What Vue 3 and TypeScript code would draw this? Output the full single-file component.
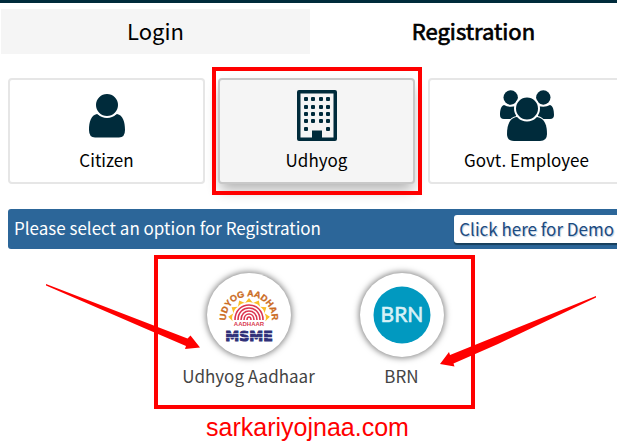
<script setup lang="ts">
import { ref } from 'vue'

type Tab = 'Login' | 'Registration'
type Role = 'citizen' | 'udhyog' | 'govt'

const tabs: Tab[] = ['Login', 'Registration']
const activeTab = ref<Tab>('Registration')
const role = ref<Role>('udhyog')

const roles: { id: Role; label: string }[] = [
  { id: 'citizen', label: 'Citizen' },
  { id: 'udhyog', label: 'Udhyog' },
  { id: 'govt', label: 'Govt. Employee' },
]

const windowRows = [9, 17, 24, 31]
const windowCols = [7, 14, 22, 29]
const rayAngles = [-84, -56, -28, 0, 28, 56, 84]
</script>

<template>
  <div class="page">
    <header class="topbar"></header>
    <nav class="tabs">
      <button
        v-for="t in tabs"
        :key="t"
        type="button"
        class="tab"
        :class="{ active: activeTab === t }"
        @click="activeTab = t"
      >{{ t }}</button>
    </nav>

    <main class="content">
      <div class="roles">
        <button
          v-for="r in roles"
          :key="r.id"
          type="button"
          class="role"
          :class="{ selected: role === r.id }"
          @click="role = r.id"
        >
          <svg v-if="r.id === 'citizen'" class="icon" width="40" height="52" viewBox="0 0 40 52" aria-hidden="true">
            <path d="M10 24C4 25 2 32 2 40Q2 47.500 8 47.500H32Q38 47.500 38 40C38 32 36 25 30 24Q20 30 10 24Z" />
            <circle cx="20" cy="15" r="12" class="cutout" />
          </svg>
          <svg v-else-if="r.id === 'udhyog'" class="icon" width="40" height="52" viewBox="0 0 40 52" aria-hidden="true">
            <path fill-rule="evenodd" d="M2 0H38Q40 0 40 2V49Q40 51 38 51H2Q0 51 0 49V2Q0 0 2 0ZM3.500 3.500V47.500H15V40.500H25V47.500H36.500V3.500Z" />
            <template v-for="y in windowRows" :key="y">
              <rect v-for="x in windowCols" :key="x" :x="x" :y="y - 2" width="4" height="4" rx="1" />
            </template>
            <rect x="7" y="37" width="4" height="4" rx="1" />
            <rect x="29" y="37" width="4" height="4" rx="1" />
          </svg>
          <svg v-else class="icon" width="56" height="52" viewBox="0 0 56 52" aria-hidden="true">
            <circle cx="11.700" cy="7.500" r="7.200" />
            <circle cx="44.300" cy="7.500" r="7.200" />
            <path d="M5 15C2 16 1 20 1 25Q1 29 5 29H17V16Q10 18 5 15Z" />
            <path d="M51 15C54 16 55 20 55 25Q55 29 51 29H39V16Q46 18 51 15Z" />
            <path class="edge" d="M18 27C10 28 8 36 8 44Q8 51 15 51H41Q48 51 48 44C48 36 46 28 38 27Z" />
            <circle cx="28" cy="18.500" r="12" class="cutout" />
          </svg>
          <span>{{ r.label }}</span>
          <span v-if="r.id === 'udhyog'" class="marker"></span>
        </button>
      </div>

      <div class="banner">
        <span>Please select an option for Registration</span>
        <button type="button" class="demo">Click here for Demo</button>
      </div>

      <div class="options-row">
        <div class="options">
          <a href="#udhyog-aadhaar" class="option">
            <span class="badge">
              <svg width="84" height="84" viewBox="0 0 84 84" aria-hidden="true">
                <defs>
                  <path id="arch" d="M20 53A23 23 0 1 1 64 53" />
                </defs>
                <text class="arch-text"><textPath href="#arch" startOffset="50%" text-anchor="middle">UDYOG AADHAR</textPath></text>
                <path
                  v-for="a in rayAngles"
                  :key="a"
                  class="ray"
                  d="M38 30L42 25L46 30Q42 28 38 30Z"
                  :transform="`rotate(${a} 42 46)`"
                />
                <g class="print">
                  <path d="M28 47C28 27 56 27 56 47" />
                  <path d="M31 47C31 31 53 31 53 47" />
                  <path d="M34 47C34 35 50 35 50 47" />
                  <path d="M37 47C37 39 47 39 47 47" />
                  <path d="M40 47C40 43 44 43 44 47" />
                </g>
                <text class="aadhaar" x="42" y="53" text-anchor="middle">AADHAAR</text>
                <text class="msme" x="42" y="68" text-anchor="middle">MSME</text>
                <path class="stripes" d="M17 60.500H67M17 64.500H67" />
              </svg>
            </span>
            <span>Udhyog Aadhaar</span>
          </a>
          <a href="#brn" class="option">
            <span class="badge">
              <svg width="84" height="84" viewBox="0 0 84 84" aria-hidden="true">
                <circle cx="42" cy="42" r="28.500" fill="#0199c0" />
                <text class="brn" x="42" y="49" text-anchor="middle">BRN</text>
              </svg>
            </span>
            <span>BRN</span>
          </a>
          <svg class="arrow arrow-left" width="154" height="66" viewBox="0 0 154 66" aria-hidden="true">
            <path d="M0 0L141.500 54.500L144.500 51.500L154 63.500L139 65L140 62L98 44L0 1.500Z" />
          </svg>
          <svg class="arrow arrow-right" width="156" height="71" viewBox="0 0 156 71" aria-hidden="true">
            <path d="M156 0L10 59L9 56L0 68L14.500 70.500L13.500 67.500L58 48L156 1.500Z" />
          </svg>
        </div>
      </div>
    </main>
    <footer class="site">sarkariyojnaa.com</footer>
  </div>
</template>

<style>
body {
  margin: 0;
  background: #fff;
}
</style>

<style scoped>
.page {
  overflow: hidden;
  color: #000;
  font-family: "Noto Sans CJK SC", "Noto Sans", sans-serif;
  font-size: 17px;
  line-height: 24px;
}
button {
  font: inherit;
  color: inherit;
  cursor: pointer;
}
.topbar {
  height: 3px;
  background: #002b3b;
}
.tabs {
  display: grid;
  grid-template-columns: 17fr 18fr;
  margin: 6px -20px 0 1px;
}
.tab {
  height: 45px;
  padding: 0 0 4px;
  border: 0;
  background: #f5f5f5;
  font-size: 22px;
}
.tab.active {
  background: #fff;
  -webkit-text-stroke: 0.7px #000;
}
.content {
  margin: 24px -8px 0 8px;
}
.roles {
  display: grid;
  grid-template-columns: repeat(3, 1fr);
  gap: 13px;
}
.role {
  position: relative;
  display: flex;
  flex-direction: column;
  align-items: center;
  gap: 6px;
  height: 106px;
  padding: 10px 0 0;
  border: 2px solid #e6e6e6;
  border-radius: 4px;
  background: #fff;
}
.role.selected {
  border-color: #c8c8c8;
  background: #f5f5f5;
  box-shadow: 0 8px 14px -2px rgba(0, 0, 0, 0.3);
}
.icon {
  fill: #002b3b;
}
.cutout {
  stroke: #fff;
  stroke-width: 2px;
}
.edge {
  stroke: #fff;
  stroke-width: 2px;
  paint-order: stroke;
}
.marker {
  position: absolute;
  inset: -13px -9px -13px -8px;
  border: 4px solid #f00;
}
.banner {
  display: flex;
  align-items: center;
  justify-content: space-between;
  box-sizing: border-box;
  height: 40px;
  margin-top: 25px;
  padding: 0 0 2px 6px;
  border-radius: 3px;
  background: #2c6699;
  color: #fff;
}
.demo {
  height: 28px;
  margin-top: 2px;
  padding: 0 11px 0 5px;
  border: 0;
  border-radius: 3px;
  background: #fff;
  box-shadow: 0 2px 1px #173f5c;
  color: #1d4b80;
  text-shadow: 1px 1px 1px #b8cbe0;
}
.options-row {
  display: flex;
  justify-content: center;
  margin-top: 6px;
  padding-right: 4px;
}
.options {
  position: relative;
  display: flex;
  box-sizing: border-box;
  height: 154px;
  padding: 14px 0 0 14px;
  border: 4px solid #f00;
}
.option {
  display: flex;
  flex-direction: column;
  align-items: center;
  gap: 7px;
  width: 153px;
  color: #444;
  text-decoration: none;
}
.options::after {
  content: "";
  width: 0;
  margin-right: -7px;
}
.badge {
  display: block;
  width: 84px;
  height: 84px;
  border-radius: 50%;
  background: #fff;
  box-shadow: 0 0 6px 1px rgba(0, 0, 0, 0.5);
}
.badge svg {
  display: block;
}
.arch-text {
  font: 700 9px "Liberation Sans", sans-serif;
  fill: #cc6b22;
  stroke: #cc6b22;
  stroke-width: 0.3px;
}
.ray {
  fill: #fbbd28;
}
.print {
  fill: none;
  stroke: #dc3550;
  stroke-width: 1.6px;
}
.aadhaar {
  font: 700 6px "Liberation Sans", sans-serif;
  fill: #d93a50;
}
.msme {
  font: 700 14px "DejaVu Sans", sans-serif;
  fill: #303078;
  stroke: #303078;
  stroke-width: 1px;
}
.stripes {
  stroke: #fff;
  stroke-width: 0.6px;
}
.brn {
  font: 400 21px Lato, sans-serif;
  fill: #d8f1f7;
  stroke: #d8f1f7;
  stroke-width: 0.6px;
}
.arrow {
  position: absolute;
  fill: #f00;
  pointer-events: none;
}
.arrow-left {
  top: 25px;
  left: -112px;
}
.arrow-right {
  top: 37px;
  left: 282px;
}
.site {
  margin-top: 3px;
  padding-right: 2px;
  color: #f00;
  font-family: "Liberation Sans", Arial, sans-serif;
  font-size: 25px;
  line-height: 30px;
  text-align: center;
}
</style>
